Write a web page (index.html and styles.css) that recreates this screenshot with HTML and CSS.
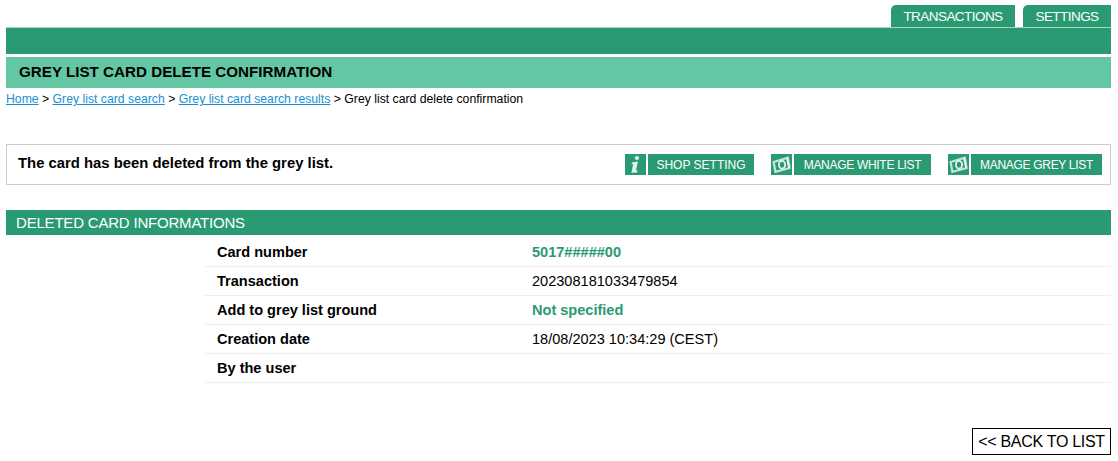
FILE: index.html
```html
<!DOCTYPE html>
<html lang="en">
<head>
    <meta charset="UTF-8">
    <title>Grey list card delete confirmation</title>
    <link rel="stylesheet" href="styles.css">
</head>
<body>
    <div class="tabs">
        <a class="tab tab-transactions">TRANSACTIONS</a>
        <a class="tab tab-settings">SETTINGS</a>
    </div>
    <div class="top-bar"></div>
    <h1 class="page-title">GREY LIST CARD DELETE CONFIRMATION</h1>
    <div class="breadcrumb">
        <a href="#">Home</a> &gt; <a href="#">Grey list card search</a> &gt; <a href="#">Grey list card search results</a> &gt; Grey list card delete confirmation
    </div>

    <div class="message-box">
        <div class="message">The card has been deleted from the grey list.</div>
        <div class="actions">
            <a class="action action-shop">
                <span class="action-icon">
                    <svg width="21" height="21" viewBox="0 0 21 21"><path d="M10.6 2.6a2.2 2.2 0 0 1 3.2.3 2.1 2.1 0 0 1-1.4 2.9 2.1 2.1 0 0 1-2.6-1.5 1.7 1.7 0 0 1 .8-1.7zM6.9 8.4l6-.9-1.9 9 1.5-.3-.4 2.2-5.7.4 1.8-8.8-1.6.2z" fill="#e4f3ee"/></svg>
                </span>
                <span class="action-label">SHOP SETTING</span>
            </a>
            <a class="action action-white">
                <span class="action-icon">
                    <svg width="21" height="21" viewBox="0 0 21 21"><path d="M2.6 8 16.8 3.6 18.6 14 4.4 17.8z" fill="none" stroke="#c4e4d8" stroke-width="2.2"/><path d="M16 4.5 18 14" stroke="#f2faf7" stroke-width="1.6"/><ellipse cx="11" cy="10.8" rx="3.1" ry="3.9" fill="none" stroke="#e4f3ee" stroke-width="1.8"/></svg>
                </span>
                <span class="action-label">MANAGE WHITE LIST</span>
            </a>
            <a class="action action-grey">
                <span class="action-icon">
                    <svg width="21" height="21" viewBox="0 0 21 21"><path d="M2.6 8 16.8 3.6 18.6 14 4.4 17.8z" fill="none" stroke="#c4e4d8" stroke-width="2.2"/><path d="M16 4.5 18 14" stroke="#f2faf7" stroke-width="1.6"/><ellipse cx="11" cy="10.8" rx="3.1" ry="3.9" fill="none" stroke="#e4f3ee" stroke-width="1.8"/></svg>
                </span>
                <span class="action-label">MANAGE GREY LIST</span>
            </a>
        </div>
    </div>

    <div class="section-title">DELETED CARD INFORMATIONS</div>
    <div class="info-table">
        <div class="info-row"><div class="info-label">Card number</div><div class="info-value highlight">5017#####00</div></div>
        <div class="info-row"><div class="info-label">Transaction</div><div class="info-value">202308181033479854</div></div>
        <div class="info-row"><div class="info-label">Add to grey list ground</div><div class="info-value highlight">Not specified</div></div>
        <div class="info-row"><div class="info-label">Creation date</div><div class="info-value">18/08/2023 10:34:29 (CEST)</div></div>
        <div class="info-row"><div class="info-label">By the user</div><div class="info-value"></div></div>
    </div>

    <div class="back-row">
        <a class="back-link">&lt;&lt; BACK TO LIST</a>
    </div>
</body>
</html>
```

FILE: styles.css
```css
body {
    margin: 0;
    padding: 5px 7px 0 6px;
    font-family: "Liberation Sans", Arial, sans-serif;
    font-size: 14.55px;
    color: #000;
    background: #fff;
}

.tabs {
    display: flex;
    justify-content: flex-end;
    gap: 8px;
    height: 22px;
}
.tab {
    display: block;
    height: 22px;
    line-height: 23px;
    text-align: center;
    color: #fff;
    font-size: 13.5px;
    letter-spacing: -0.55px;
    background: #2a9a72;
    border-top-left-radius: 5px;
}
.tab-transactions {
    width: 124px;
}
.tab-settings {
    width: 88px;
}

.top-bar {
    height: 26px;
    background: #2a9a72;
    border-top: 1px solid #a9d6c5;
}

.page-title {
    margin: 3px 0 0;
    height: 31px;
    padding-left: 13px;
    line-height: 30px;
    font-size: 15.2px;
    font-weight: bold;
    background: #64c7a4;
}

.breadcrumb {
    height: 22px;
    line-height: 22px;
    font-size: 12.24px;
}
.breadcrumb a {
    color: #1a8fd0;
}

.message-box {
    display: flex;
    justify-content: space-between;
    box-sizing: border-box;
    height: 41px;
    margin-top: 34px;
    border: 1px solid #ccc;
    padding: 0 8px 0 11px;
}
.message {
    font-size: 14.85px;
    font-weight: bold;
    line-height: 36px;
}
.actions {
    display: flex;
    gap: 17px;
    padding-top: 9px;
}
.action {
    display: flex;
    gap: 2px;
    height: 21px;
}
.action-icon {
    width: 21px;
    height: 21px;
    background: #2a9a72;
}
.action-icon svg {
    display: block;
}
.action-label {
    height: 21px;
    line-height: 22px;
    font-size: 12px;
    letter-spacing: -0.3px;
    color: #fff;
    text-align: center;
    background: #2a9a72;
}
.action-shop .action-label {
    width: 106px;
    letter-spacing: 0;
}
.action-white .action-label {
    width: 137px;
}
.action-grey .action-label {
    width: 131px;
}

.section-title {
    height: 25px;
    margin-top: 25px;
    padding-left: 10px;
    line-height: 26px;
    font-size: 15px;
    letter-spacing: -0.2px;
    color: #fff;
    background: #2a9a72;
}

.info-table {
    margin-left: 199px;
}
.info-row {
    display: flex;
    box-sizing: border-box;
    height: 29px;
    line-height: 29px;
    border-bottom: 1px solid #eee;
}
.info-row:first-child {
    height: 32px;
    line-height: 34px;
}
.info-label {
    width: 327px;
    padding-left: 12px;
    box-sizing: border-box;
    font-weight: bold;
}
.info-value {
    flex: 1;
}
.highlight {
    color: #2a9a72;
    font-weight: bold;
}

.back-row {
    display: flex;
    justify-content: flex-end;
    margin-top: 45px;
}
.back-link {
    box-sizing: border-box;
    width: 139px;
    height: 27px;
    border: 1px solid #000;
    line-height: 25px;
    text-align: center;
    font-size: 16px;
    letter-spacing: -0.3px;
}
```
